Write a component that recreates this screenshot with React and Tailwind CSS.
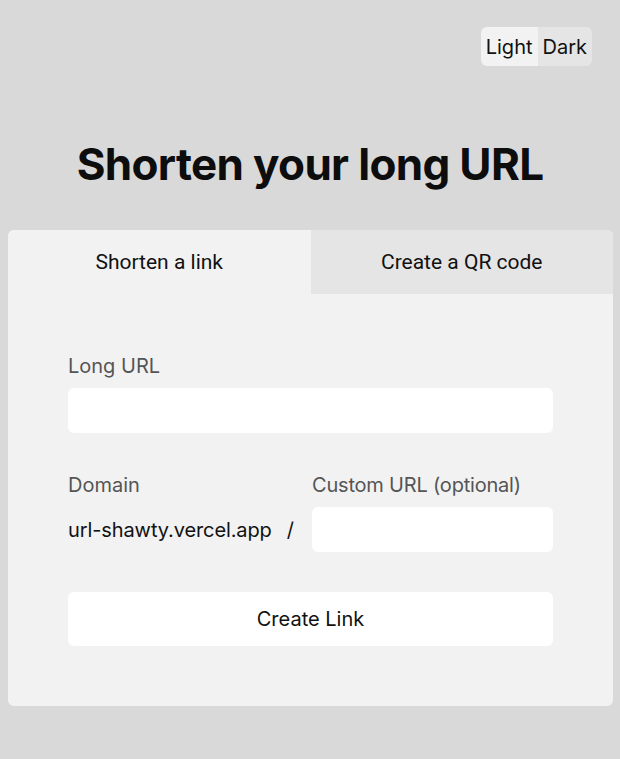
import { useState } from 'react';

export default function App() {
  const [tab, setTab] = useState('link');
  const [theme, setTheme] = useState('light');

  return (
    <div className="min-h-[759px] bg-[#d9d9d9] pb-[53px] font-['Inter',sans-serif] text-[#111]">
      <div className="flex justify-end px-7 pt-[27px]">
        <div className="flex h-[39px] overflow-hidden rounded-md text-[20px]">
          <button
            onClick={() => setTheme('light')}
            className={`px-[5px] ${theme === 'light' ? 'bg-[#f2f2f2]' : 'bg-[#e5e5e5]'}`}
          >
            Light
          </button>
          <button
            onClick={() => setTheme('dark')}
            className={`px-[5px] ${theme === 'dark' ? 'bg-[#f2f2f2]' : 'bg-[#e5e5e5]'}`}
          >
            Dark
          </button>
        </div>
      </div>

      <h1 className="mt-[71px] text-center text-[44px] font-bold leading-[54px] tracking-[-0.015em] text-[#0d0d0d]">
        Shorten your long URL
      </h1>

      <div className="ml-2 mr-[7px] mt-[39px] overflow-hidden rounded-md bg-[#f2f2f2]">
        <div className="grid h-16 grid-cols-2 font-['Roboto',sans-serif] text-[21px]">
          <button
            onClick={() => setTab('link')}
            className={`pt-[2px] ${tab === 'link' ? 'bg-[#f2f2f2]' : 'bg-[#e5e5e5]'}`}
          >
            Shorten a link
          </button>
          <button
            onClick={() => setTab('qr')}
            className={`pt-[2px] ${tab === 'qr' ? 'bg-[#f2f2f2]' : 'bg-[#e5e5e5]'}`}
          >
            Create a QR code
          </button>
        </div>

        <form className="px-[60px] pb-[60px] pt-[60px]" onSubmit={(event) => event.preventDefault()}>
          <label className="block">
            <span className="block text-[20px] leading-[24px] text-[#555]">Long URL</span>
            <input type="text" className="mt-[10px] block h-[45px] w-full rounded-md bg-white px-3 text-[20px] outline-none" />
          </label>

          <div className="mt-10 grid grid-cols-2 gap-x-[3px]">
            <div>
              <span className="block text-[20px] leading-[24px] text-[#555]">Domain</span>
              <div className="mt-[10px] flex h-[45px] items-center text-[20px] tracking-[-0.005em] text-[#111]">
                <span>url-shawty.vercel.app</span>
                <span className="ml-[15px]">/</span>
              </div>
            </div>
            <label className="block">
              <span className="block text-[20px] leading-[24px] tracking-[-0.01em] text-[#555]">Custom URL (optional)</span>
              <input type="text" className="mt-[10px] block h-[45px] w-full rounded-md bg-white px-3 text-[20px] outline-none" />
            </label>
          </div>

          <button type="submit" className="mt-10 block h-[54px] w-full rounded-md bg-white text-[20px] text-[#111]">
            Create Link
          </button>
        </form>
      </div>
    </div>
  );
}
